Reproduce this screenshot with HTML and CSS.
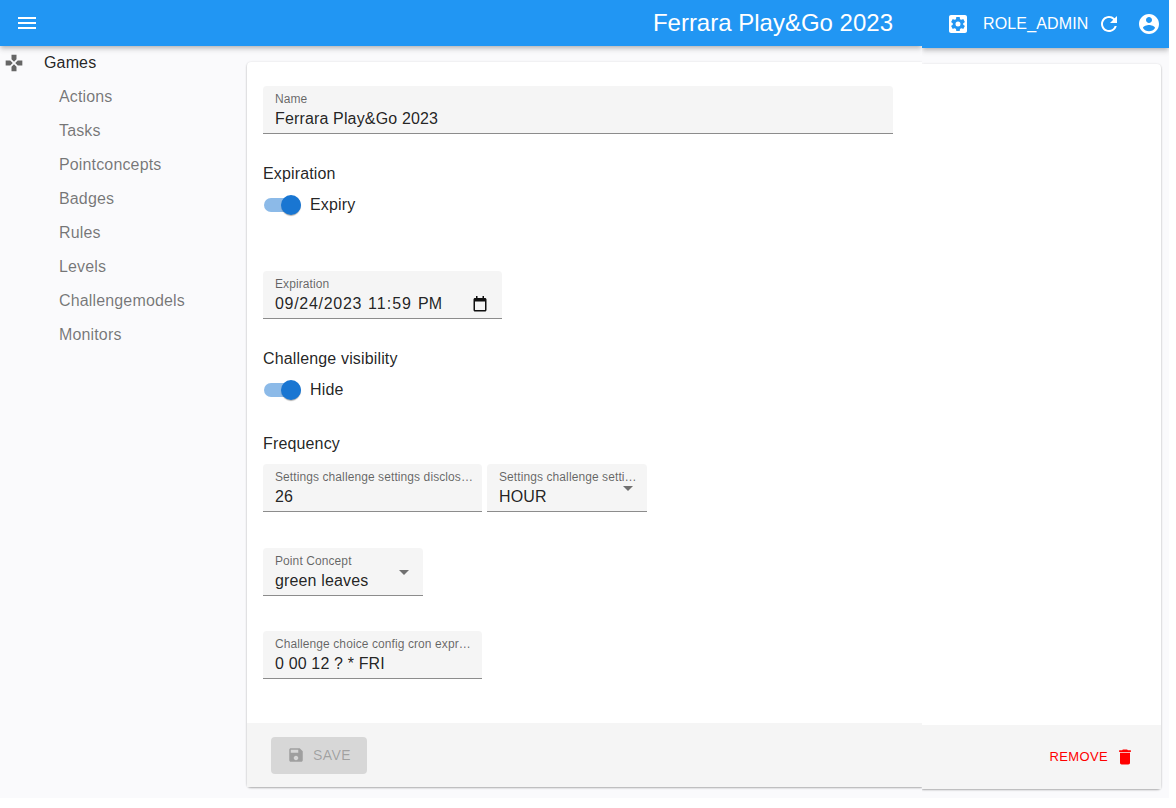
FILE: index.html
```html
<!DOCTYPE html>
<html lang="en">
  <head>
    <meta charset="UTF-8" />
    <title>Ferrara Play&amp;Go 2023</title>
    <link rel="stylesheet" href="styles.css">
  </head>

  <body>
    <div class="page">
      <div class="col-left">
        <header class="bar bar-left">
          <svg class="menu-icon" viewBox="0 0 24 24" width="24" height="24"><path d="M3 18h18v-2H3v2zm0-5h18v-2H3v2zm0-7v2h18V6H3z"/></svg>
          <h1 class="title">Ferrara Play&amp;Go 2023</h1>
        </header>
        <div class="main">
          <nav class="side">
            <div class="side-head">
              <svg class="games-icon" viewBox="0 0 24 24" width="20" height="20"><path d="M15 7.500V2H9v5.500l3 3 3-3zM7.500 9H2v6h5.500l3-3-3-3zM9 16.500V22h6v-5.500l-3-3-3 3zM16.500 9l-3 3 3 3H22V9h-5.500z"/></svg>
              <span>Games</span>
            </div>
            <ul class="side-list">
              <li>Actions</li>
              <li>Tasks</li>
              <li>Pointconcepts</li>
              <li>Badges</li>
              <li>Rules</li>
              <li>Levels</li>
              <li>Challengemodels</li>
              <li>Monitors</li>
            </ul>
          </nav>
          <div class="card card-left">
            <form class="form">
              <div class="field field-name">
                <label>Name</label>
                <div class="value">Ferrara Play&amp;Go 2023</div>
              </div>

              <div class="group-label group-expiration">Expiration</div>
              <div class="switch-row">
                <span class="switch"><i></i></span>
                <span>Expiry</span>
              </div>

              <div class="field field-date">
                <label>Expiration</label>
                <div class="value date-value">
                  <span class="date-part">09/24/2023</span>
                  <span class="time-part">11:59</span>
                  <span class="ampm-part">PM</span>
                  <svg viewBox="0 0 14 16" width="14" height="16"><path fill-rule="evenodd" d="M3 0h1.500v2h5V0H11v2h1c.8 0 1.500.7 1.500 1.500v10.500c0 .8-.7 1.500-1.500 1.500H2c-.8 0-1.500-.7-1.500-1.500V3.500C.5 2.700 1.200 2 2 2h1zM2 5.500V14h10V5.500z"/></svg>
                </div>
              </div>

              <div class="group-label group-visibility">Challenge visibility</div>
              <div class="switch-row">
                <span class="switch"><i></i></span>
                <span>Hide</span>
              </div>

              <div class="group-label group-frequency">Frequency</div>
              <div class="field-row">
                <div class="field field-md">
                  <label>Settings challenge settings disclos…</label>
                  <div class="value">26</div>
                </div>
                <div class="field field-sm">
                  <label>Settings challenge setti…</label>
                  <div class="value">HOUR</div>
                  <span class="caret"></span>
                </div>
              </div>

              <div class="field field-sm field-concept">
                <label>Point Concept</label>
                <div class="value">green leaves</div>
                <span class="caret"></span>
              </div>

              <div class="field field-md field-cron">
                <label>Challenge choice config cron expr…</label>
                <div class="value">0 00 12 ? * FRI</div>
              </div>
            </form>
            <div class="toolbar">
              <button class="save-btn" type="button" disabled>
                <svg viewBox="0 0 24 24" width="18" height="18"><path d="M17 3H5c-1.110 0-2 .9-2 2v14c0 1.100.89 2 2 2h14c1.100 0 2-.9 2-2V7l-4-4zm-5 16c-1.660 0-3-1.340-3-3s1.340-3 3-3 3 1.340 3 3-1.340 3-3 3zm3-10H5V5h10v4z"/></svg>
                Save
              </button>
            </div>
          </div>
        </div>
      </div>

      <div class="col-right">
        <header class="bar bar-right">
          <svg class="bar-icon" viewBox="0 0 24 24" width="24" height="24"><path d="M19 3H5c-1.100 0-2 .9-2 2v14c0 1.100.9 2 2 2h14c1.100 0 2-.9 2-2V5c0-1.100-.9-2-2-2zm-1.750 9c0 .23-.02.46-.05.68l1.480 1.160c.13.110.17.300.08.450l-1.400 2.420c-.09.150-.27.210-.43.150l-1.740-.7c-.36.280-.76.510-1.180.690l-.26 1.850c-.03.170-.18.300-.35.300h-2.800c-.17 0-.32-.13-.35-.29l-.26-1.850c-.43-.18-.82-.41-1.180-.69l-1.740.7c-.16.060-.34 0-.43-.15l-1.400-2.420c-.09-.15-.05-.34.080-.45l1.480-1.160c-.03-.23-.05-.46-.05-.69 0-.23.02-.46.05-.68l-1.480-1.160c-.13-.11-.17-.3-.08-.45l1.400-2.420c.09-.15.27-.21.430-.15l1.740.7c.36-.28.76-.51 1.180-.69l.26-1.850c.03-.17.18-.3.35-.3h2.800c.17 0 .32.13.35.29l.26 1.850c.43.18.82.410 1.180.690l1.740-.7c.16-.06.340 0 .43.150l1.400 2.420c.09.150.050.340-.080.450l-1.480 1.160c.03.230.050.460.050.690zM12 9.500a2.500 2.500 0 1 0 0 5 2.500 2.500 0 0 0 0-5z" fill-rule="evenodd"/></svg>
          <span class="role">ROLE_ADMIN</span>
          <svg class="bar-icon refresh" viewBox="0 0 24 24" width="24" height="24"><path d="M17.650 6.350A7.958 7.958 0 0 0 12 4c-4.420 0-7.990 3.580-7.990 8s3.570 8 7.990 8c3.730 0 6.840-2.550 7.730-6h-2.080A5.990 5.990 0 0 1 12 18c-3.310 0-6-2.690-6-6s2.690-6 6-6c1.660 0 3.140.69 4.220 1.780L13 11h7V4l-2.350 2.350z"/></svg>
          <svg class="bar-icon account" viewBox="0 0 24 24" width="24" height="24"><path d="M12 2C6.480 2 2 6.480 2 12s4.480 10 10 10 10-4.480 10-10S17.520 2 12 2zm0 3c1.660 0 3 1.340 3 3s-1.340 3-3 3-3-1.340-3-3 1.340-3 3-3zm0 14.200a7.200 7.200 0 0 1-6-3.220c.03-1.990 4-3.080 6-3.080 1.990 0 5.970 1.090 6 3.080a7.200 7.200 0 0 1-6 3.220z"/></svg>
        </header>
        <div class="card card-right">
          <div class="card-fill"></div>
          <div class="toolbar toolbar-right">
            <button class="remove-btn" type="button">
              Remove
              <svg viewBox="0 0 24 24" width="20" height="20"><path d="M6 19c0 1.100.9 2 2 2h8c1.100 0 2-.9 2-2V7H6v12zM19 4h-3.500l-1-1h-5l-1 1H5v2h14V4z"/></svg>
            </button>
          </div>
        </div>
      </div>
    </div>
  </body>
</html>
```

FILE: styles.css
```css
* {
  box-sizing: border-box;
  padding: 0;
  margin: 0;
}

html,
body {
  height: 100%;
  background: #fff;
}

body {
  overflow: hidden;
  font-family: "Liberation Sans", Arial, sans-serif;
  font-size: 16px;
  letter-spacing: 0.15px;
  color: rgba(0, 0, 0, 0.87);
}

.page {
  display: flex;
  width: 1169px;
  height: 798px;
  background: #fafafc;
  overflow: hidden;
}

.col-left {
  display: flex;
  flex-direction: column;
  width: 922px;
}

.col-right {
  display: flex;
  flex-direction: column;
  width: 247px;
  height: 789px;
}

.bar {
  display: flex;
  align-items: center;
  flex: none;
  position: relative;
  z-index: 2;
  background: #2196f3;
  color: #fff;
  box-shadow: 0 2px 4px -1px rgba(0, 0, 0, 0.2), 0 4px 5px 0 rgba(0, 0, 0, 0.12);
}

.bar svg {
  fill: #fff;
}

.bar-left {
  height: 46px;
  padding: 0 29px 0 15px;
  justify-content: space-between;
  clip-path: inset(0 0 -12px 0);
}

.bar-right {
  height: 48px;
  padding: 0 8px 0 24px;
  clip-path: inset(0 0 -12px 0);
}

.title {
  font-size: 24px;
  font-weight: 400;
  letter-spacing: 0;
  line-height: 46px;
}

.role {
  margin-left: 13px;
  font-size: 16px;
  line-height: 48px;
}

.refresh {
  margin-left: 8px;
}

.account {
  margin-left: 16px;
}

.main {
  display: flex;
  flex: 1;
  min-height: 0;
}

.side {
  width: 247px;
  flex: none;
}

.side-head {
  display: flex;
  align-items: center;
  height: 34px;
  padding-left: 4px;
}

.side-head span {
  margin-left: 20px;
  line-height: 32px;
}

.games-icon {
  fill: #666;
}

.side-list {
  list-style: none;
}

.side-list li {
  height: 34px;
  padding-left: 59px;
  line-height: 34px;
  color: rgba(0, 0, 0, 0.54);
}

.card {
  display: flex;
  flex-direction: column;
  background: #fff;
  box-shadow: 0 1px 2px rgba(0, 0, 0, 0.3), 0 0 3px rgba(0, 0, 0, 0.06);
}

.card-left {
  width: 675px;
  height: 725px;
  margin-top: 16px;
  border-radius: 4px 0 0 4px;
  clip-path: inset(-6px 0 -6px -6px);
}

.card-right {
  width: 239px;
  flex: 1;
  margin-top: 16px;
  border-radius: 0 4px 4px 0;
  clip-path: inset(-6px -6px -6px 0);
}

.card-fill {
  flex: 1;
}

.form {
  flex: 1;
  padding: 24px 16px 0;
}

.field {
  position: relative;
  height: 48px;
  padding: 6px 12px 0;
  background: #f5f5f5;
  border-bottom: 1px solid #8c8c8c;
  border-radius: 4px 4px 0 0;
}

.field label {
  display: block;
  height: 14px;
  font-size: 12px;
  line-height: 14px;
  letter-spacing: 0.09px;
  color: rgba(0, 0, 0, 0.6);
  white-space: nowrap;
}

.field .value {
  height: 20px;
  margin-top: 3px;
  line-height: 20px;
  white-space: nowrap;
}

.field-name {
  width: 630px;
}

.field-date {
  width: 239px;
  margin-top: 54px;
}

.field-md {
  width: 219px;
}

.field-sm {
  width: 160px;
}

.field-row {
  display: flex;
  gap: 5px;
  margin-top: 10px;
}

.field-concept {
  margin-top: 36px;
}

.field-cron {
  margin-top: 35px;
}

.date-value {
  display: flex;
  align-items: center;
}

.date-part {
  letter-spacing: 0.7px;
}

.time-part {
  margin-left: 6px;
  letter-spacing: 1px;
}

.ampm-part {
  margin-left: 6px;
}

.date-value svg {
  margin-left: auto;
  margin-right: 3px;
  fill: #111;
}

.caret {
  position: absolute;
  top: 22px;
  right: 14px;
  width: 0;
  height: 0;
  border-top: 5px solid rgba(0, 0, 0, 0.54);
  border-right: 5px solid transparent;
  border-left: 5px solid transparent;
}

.group-label {
  height: 20px;
  line-height: 20px;
}

.group-expiration {
  margin-top: 30px;
}

.group-visibility {
  margin-top: 30px;
}

.group-frequency {
  margin-top: 32px;
}

.switch-row {
  display: flex;
  align-items: center;
  gap: 9px;
  height: 24px;
  margin-top: 9px;
}

.switch {
  position: relative;
  width: 37px;
  height: 14px;
  margin-left: 1px;
  border-radius: 7px;
  background: #8cbae8;
}

.switch i {
  position: absolute;
  top: -3px;
  right: 0;
  width: 20px;
  height: 20px;
  border-radius: 50%;
  background: #1976d2;
  box-shadow: 0 2px 1px -1px rgba(0, 0, 0, 0.2), 0 1px 1px 0 rgba(0, 0, 0, 0.14);
}

.toolbar {
  display: flex;
  align-items: center;
  flex: none;
  height: 64px;
  padding: 0 24px;
  background: #f5f5f5;
}

.toolbar-right {
  justify-content: flex-end;
  padding-right: 26px;
}

.save-btn,
.remove-btn {
  display: flex;
  align-items: center;
  border: 0;
  font-family: inherit;
  font-size: 14px;
  line-height: 24px;
  letter-spacing: 0.4px;
  text-transform: uppercase;
}

.save-btn {
  gap: 8px;
  width: 96px;
  height: 37px;
  margin-left: 0;
  padding: 0 16px;
  border-radius: 4px;
  background: rgba(0, 0, 0, 0.12);
  color: rgba(0, 0, 0, 0.26);
}

.save-btn svg {
  fill: rgba(0, 0, 0, 0.26);
}

.remove-btn {
  gap: 7px;
  background: none;
  font-size: 13px;
  letter-spacing: 0.37px;
  color: #f00;
}

.remove-btn svg {
  fill: #f00;
}
```
